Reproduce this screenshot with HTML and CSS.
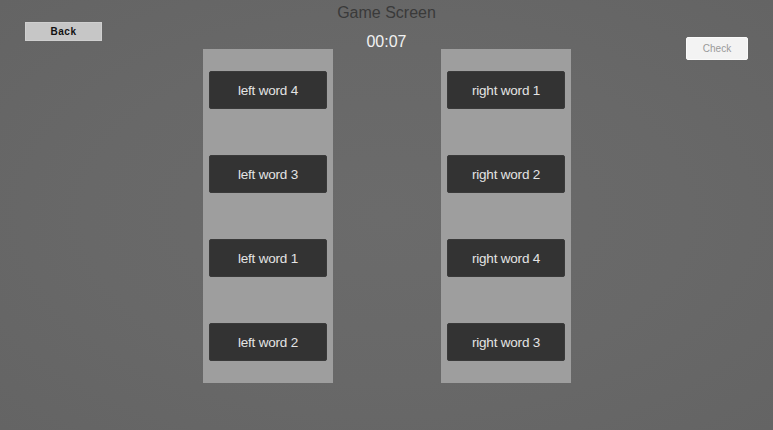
FILE: index.html
```html
<!DOCTYPE html>
<html>
<head>
<meta charset="utf-8">
<link rel="stylesheet" href="styles.css">
</head>
<body>
<div class="screen">
  <div class="topbar">
    <div class="side side-left">
      <button class="btn-back">Back</button>
    </div>
    <div class="center">
      <div class="title">Game Screen</div>
      <div class="timer">00:07</div>
    </div>
    <div class="side side-right">
      <button class="btn-check">Check</button>
    </div>
  </div>
  <div class="columns">
    <div class="panel">
      <div class="word">left word 4</div>
      <div class="word">left word 3</div>
      <div class="word">left word 1</div>
      <div class="word">left word 2</div>
    </div>
    <div class="panel">
      <div class="word">right word 1</div>
      <div class="word">right word 2</div>
      <div class="word">right word 4</div>
      <div class="word">right word 3</div>
    </div>
  </div>
</div>
</body>
</html>
```

FILE: styles.css
```css
html, body {
  margin: 0;
  padding: 0;
}
body {
  width: 773px;
  height: 430px;
  overflow: hidden;
  font-family: "Liberation Sans", Arial, sans-serif;
  background: radial-gradient(ellipse at 50% 50%, #6b6b6b 0%, #686868 55%, #646464 100%);
}
.screen {
  width: 773px;
  height: 430px;
  display: flex;
  flex-direction: column;
}
.topbar {
  height: 49px;
  display: grid;
  grid-template-columns: 1fr auto 1fr;
  align-items: start;
}
.side {
  display: flex;
}
.side-left {
  justify-content: flex-start;
  padding-left: 25px;
  padding-top: 22px;
}
.side-right {
  justify-content: flex-end;
  padding-right: 25px;
  padding-top: 37px;
}
.center {
  display: flex;
  flex-direction: column;
  align-items: center;
  padding-top: 3px;
}
.title {
  font-size: 16px;
  line-height: 20px;
  color: #3a3a3a;
}
.timer {
  margin-top: 9px;
  font-size: 16px;
  line-height: 20px;
  color: #f2f2f2;
}
.btn-back {
  width: 77px;
  height: 19px;
  margin: 0;
  padding: 0;
  border: 1px solid #cfcfcf;
  background: #c6c6c6;
  color: #111;
  font-family: "Liberation Sans", Arial, sans-serif;
  font-weight: bold;
  font-size: 10px;
  letter-spacing: 0.5px;
  line-height: 17px;
}
.btn-check {
  width: 62px;
  height: 23px;
  margin: 0;
  padding: 0;
  border: 1px solid #fafafa;
  border-radius: 2px;
  background: #f3f3f3;
  color: #9a9a9a;
  font-family: "Liberation Sans", Arial, sans-serif;
  font-size: 10px;
  line-height: 21px;
}
.columns {
  display: flex;
  justify-content: center;
  gap: 108px;
  padding-left: 1px;
}
.panel {
  width: 130px;
  height: 334px;
  box-sizing: border-box;
  padding: 22px 6px;
  background: #9e9e9e;
  display: flex;
  flex-direction: column;
  justify-content: space-between;
}
.word {
  height: 38px;
  background: #333333;
  border-radius: 2px;
  border: 1px solid #3a3a3a;
  box-sizing: border-box;
  color: #e4e4e4;
  font-size: 13.5px;
  letter-spacing: -0.2px;
  display: flex;
  align-items: center;
  justify-content: center;
}
```
